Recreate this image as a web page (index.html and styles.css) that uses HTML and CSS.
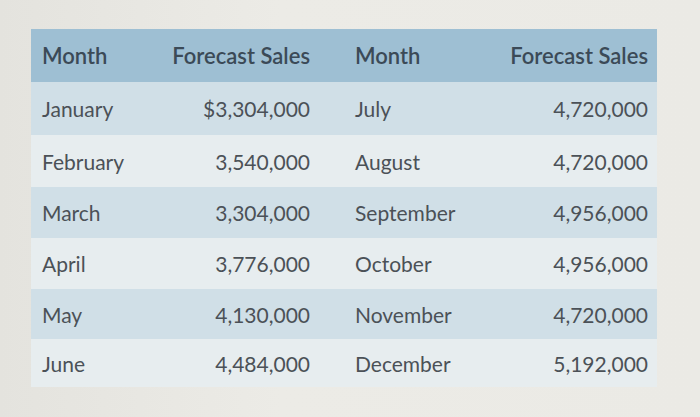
FILE: index.html
```html
<!DOCTYPE html>
<html>
<head>
<meta charset="utf-8">
<link rel="stylesheet" href="styles.css">
</head>
<body>
<div class="page">
  <table class="sales">
    <colgroup>
      <col class="c1"><col class="c2"><col class="c3"><col class="c4">
    </colgroup>
    <thead>
      <tr class="head">
        <th class="m">Month</th><th class="v">Forecast Sales</th><th class="m2">Month</th><th class="v2">Forecast Sales</th>
      </tr>
    </thead>
    <tbody>
      <tr class="odd r1"><td class="m">January</td><td class="v">$3,304,000</td><td class="m2">July</td><td class="v2">4,720,000</td></tr>
      <tr class="even r2"><td class="m">February</td><td class="v">3,540,000</td><td class="m2">August</td><td class="v2">4,720,000</td></tr>
      <tr class="odd r3"><td class="m">March</td><td class="v">3,304,000</td><td class="m2">September</td><td class="v2">4,956,000</td></tr>
      <tr class="even r4"><td class="m">April</td><td class="v">3,776,000</td><td class="m2">October</td><td class="v2">4,956,000</td></tr>
      <tr class="odd r5"><td class="m">May</td><td class="v">4,130,000</td><td class="m2">November</td><td class="v2">4,720,000</td></tr>
      <tr class="even r6"><td class="m">June</td><td class="v">4,484,000</td><td class="m2">December</td><td class="v2">5,192,000</td></tr>
    </tbody>
  </table>
</div>
</body>
</html>
```
FILE: styles.css
```css
html, body {
  margin: 0;
  padding: 0;
}
body {
  width: 700px;
  height: 417px;
  overflow: hidden;
  background: linear-gradient(90deg, #e4e3de 0%, #ecebe6 40%, #ebeae5 100%);
  font-family: Lato, "Open Sans", sans-serif;
}
.page {
  padding: 29px 0 0 31px;
}
.sales {
  border-collapse: collapse;
  width: 626px;
  table-layout: fixed;
}
.c1 { width: 130px; }
.c2 { width: 160px; }
.c3 { width: 160px; }
.c4 { width: 176px; }
.sales th, .sales td {
  padding: 0;
  white-space: nowrap;
}
.head {
  background: #9ebfd3;
  height: 53px;
}
.head th {
  font-size: 22px;
  font-weight: 600;
  color: #3b4a57;
}
.sales td {
  font-size: 21px;
  color: #4b5157;
}
.odd { background: #d0dfe7; }
.even { background: #e7edef; }
.r1 { height: 53px; }
.r2 { height: 52px; }
.r3 { height: 51px; }
.r4 { height: 51px; }
.r5 { height: 50px; }
.r6 { height: 48px; }
.m { text-align: left; padding-left: 11px !important; }
.v { text-align: right; padding-right: 11px !important; }
.m2 { text-align: left; padding-left: 34px !important; }
.v2 { text-align: right; padding-right: 9px !important; }
```
